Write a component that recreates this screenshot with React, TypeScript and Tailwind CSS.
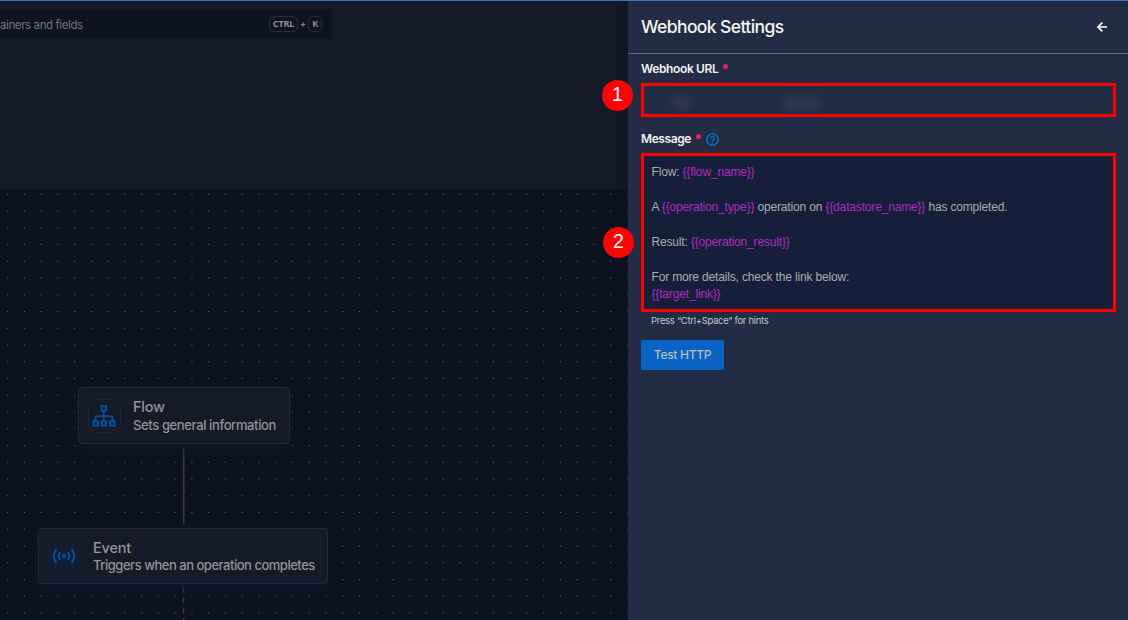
import type { ReactNode } from "react";

function Variable({ children }: { children: ReactNode }) {
  return <span className="text-[#b429c2]">{`{{${children}}}`}</span>;
}

function Required() {
  return <span className="mt-[-6px] size-[5px] rounded-full bg-[#e91e63]" />;
}

function Key({ children }: { children: ReactNode }) {
  return (
    <kbd className="flex h-4 items-center rounded-[5px] border border-[#292e3b] px-[3px] font-['Noto_Sans',sans-serif] text-[9px] font-bold tracking-[-0.15px] text-[#8c8e93]">
      {children}
    </kbd>
  );
}

function FlowIcon() {
  return (
    <svg className="h-[22px] w-6" viewBox="0 0 24 22" fill="none" stroke="#05509b" strokeWidth="2">
      <rect x="9.6" y="1.2" width="4.4" height="4.4" />
      <rect x="1.4" y="16.2" width="4.4" height="4.4" />
      <rect x="9.6" y="16.2" width="4.4" height="4.4" />
      <rect x="18.2" y="16.2" width="4.4" height="4.4" />
      <path d="M11.8 6v10M3.6 16v-3.2q0-1.6 1.6-1.6h13.6q1.6 0 1.6 1.6V16" strokeWidth="1.8" />
    </svg>
  );
}

function EventIcon() {
  return (
    <svg className="h-4 w-[22px]" viewBox="0 0 22 16" fill="none" stroke="#05509b" strokeWidth="2" strokeLinecap="round">
      <circle cx="11" cy="8" r="2.2" fill="#05509b" stroke="none" />
      <path d="M6.9 4.8a5.2 5.2 0 0 0 0 6.4M15.1 4.8a5.2 5.2 0 0 1 0 6.4M3 1.8a9.6 9.6 0 0 0 0 12.4M19 1.8a9.6 9.6 0 0 1 0 12.4" />
    </svg>
  );
}

export default function App() {
  return (
    <div className="relative flex h-[620px] w-[1128px] overflow-hidden border-t border-[#4073ad] bg-[#141a29] font-[Inter,sans-serif]">
      <main className="flex w-[628px] flex-col">
        <header className="h-12 border-b border-[#111725] pt-2">
          <div className="flex h-[30px] w-[332px] items-center justify-between rounded-r-[4px] bg-[#0d1321] pr-[10px]">
            <span className="pt-[3px] text-[11.5px] tracking-[-0.4px] text-[#72757c]">ainers and fields</span>
            <span className="flex items-center gap-[2px] text-[9px] font-bold text-[#828489]">
              <Key>CTRL</Key>
              <span>+</span>
              <Key>K</Key>
            </span>
          </div>
        </header>
        <div className="h-[140px]" />
        <section className="relative flex-1 overflow-hidden bg-[#0c1220]">
          <svg className="absolute inset-0 size-full">
            <defs>
              <pattern id="dots" x="-0.7" y="-3.1" width="16.75" height="16.75" patternUnits="userSpaceOnUse">
                <circle cx="8.375" cy="8.375" r="0.6" fill="#7c7c80" />
              </pattern>
            </defs>
            <rect width="100%" height="100%" fill="url(#dots)" />
            <path d="M183.7 258V335" stroke="#3b3d46" strokeWidth="1.6" />
            <path d="M183.5 398V432" stroke="#3b3d46" strokeWidth="1.4" strokeDasharray="5.5 5" />
          </svg>
          <div className="absolute left-[78px] top-[198px] flex h-[57px] w-[212px] items-center gap-3 rounded-[4px] border border-[#232936] bg-[#141a28] pl-[9px] shadow-[0_5px_14px_#0f1a30]">
            <div className="flex h-[34px] w-[33px] items-center justify-center rounded-[9px] border border-[#1e2432] pr-px">
              <FlowIcon />
            </div>
            <div className="text-[#939497]">
              <div className="text-[14.5px] leading-[18px] font-medium tracking-[-0.2px]">Flow</div>
              <div className="text-[13px] leading-[18px] font-medium tracking-[-0.38px] whitespace-nowrap">Sets general information</div>
            </div>
          </div>
          <div className="absolute left-[38px] top-[338.5px] flex h-[56px] w-[290px] items-center gap-3 rounded-[4px] border border-[#232936] bg-[#141a28] pl-[9px] shadow-[0_5px_14px_#0f1a30]">
            <div className="flex h-[34px] w-[33px] items-center justify-center rounded-[9px] bg-[#131d31] pr-px">
              <EventIcon />
            </div>
            <div className="text-[#939497]">
              <div className="pt-px text-[14.5px] leading-[17px] font-medium tracking-[-0.2px]">Event</div>
              <div className="text-[13px] leading-[18px] font-medium tracking-[-0.48px] whitespace-nowrap">Triggers when an operation completes</div>
            </div>
          </div>
        </section>
      </main>

      <aside className="relative flex w-[500px] flex-col bg-[#232c45] shadow-[0_0_14px_#0c111c]">
        <header className="flex h-[53px] items-center justify-between border-b border-[#626a82] pr-[21px] pl-[13px]">
          <h1 className="pt-px text-[17.5px] font-medium tracking-[-0.6px] text-[#f4f4f6]">Webhook Settings</h1>
          <svg className="size-[10px]" viewBox="0 0 10 10" fill="none" stroke="white" strokeWidth="1.7">
            <path d="M10 5H1M5.3.6.9 5l4.4 4.4" />
          </svg>
        </header>
        <div className="flex flex-col items-start pr-[13px] pl-[13px]">
          <label className="mt-[7px] flex h-4 items-center gap-[5px] text-[12px] font-semibold tracking-[-0.38px] text-[#f0f0f3]">
            Webhook URL
            <Required />
          </label>
          <div className="mt-[6px] flex h-[34px] w-[475px] items-center border-[3px] border-[#ff0000] pt-[5px] pl-7">
            <span className="h-3 w-5 rounded-full bg-[#303a50] blur-[4px]" />
            <span className="ml-[90px] h-3 w-10 rounded-full bg-[#303a50] blur-[4px]" />
          </div>
          <label className="mt-[14px] flex h-4 items-center gap-[5px] text-[12px] font-semibold tracking-[-0.42px] text-[#f0f0f3]">
            Message
            <Required />
            <svg className="size-[13px]" viewBox="0 0 13 13" fill="none" stroke="#0875dc" strokeWidth="1.3">
              <circle cx="6.5" cy="6.5" r="5.7" />
              <path d="M4.7 5.3a1.8 1.8 0 1 1 2.7 1.5q-.9.5-.9 1.3M6.5 9v1.3" />
            </svg>
          </label>
          <div className="mt-[6px] h-[159px] w-[475px] border-[3px] border-[#ff0000] bg-[#161f39] pt-[7.5px] pl-[7.5px] font-['Liberation_Sans',sans-serif] text-[12px] leading-[17.5px] tracking-[-0.165px] text-[#acacac]">
            <p>Flow: <Variable>flow_name</Variable></p>
            <p className="mt-[17.5px]">A <Variable>operation_type</Variable> operation on <Variable>datastore_name</Variable> has completed.</p>
            <p className="mt-[17.5px]">Result: <Variable>operation_result</Variable></p>
            <p className="mt-[17.5px]">For more details, check the link below:</p>
            <p className="-mt-[0.5px]"><Variable>target_link</Variable></p>
          </div>
          <p className="mt-[2px] ml-[10px] h-[14px] text-[9.5px] leading-[14px] tracking-[-0.3px] text-[#c3c5cc]">Press “Ctrl+Space” for hints</p>
          <button className="mt-3 flex h-[30px] w-[83px] items-center justify-center rounded-[2px] bg-[#0b64c4] text-[12px] font-medium tracking-[-0.3px] text-[#b5bdcc]">Test HTTP</button>
        </div>
      </aside>

      <span className="absolute top-[79px] left-[602px] flex size-[31px] items-center justify-center rounded-full bg-[#ff0206] pb-px font-['Liberation_Sans',sans-serif] text-[19.5px] leading-none text-white">1</span>
      <span className="absolute top-[226px] left-[603px] flex size-[31px] items-center justify-center rounded-full bg-[#ff0206] pb-px font-['Liberation_Sans',sans-serif] text-[19.5px] leading-none text-white">2</span>
    </div>
  );
}
